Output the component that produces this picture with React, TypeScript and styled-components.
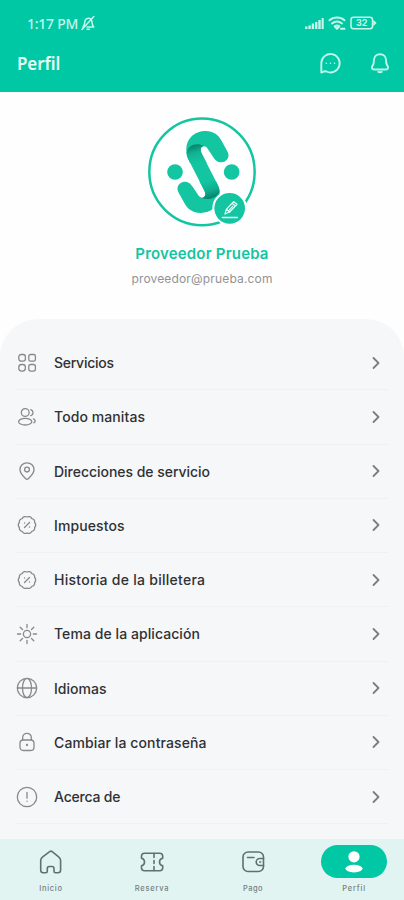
import React from "react";
import styled, { createGlobalStyle } from "styled-components";

const Global = createGlobalStyle`
  * { box-sizing: border-box; }
  body { margin: 0; background: #fff; font-family: Inter, "Noto Sans", sans-serif; }
`;

const Screen = styled.div`
  width: 404px; height: 900px; overflow: hidden;
  display: flex; flex-direction: column; background: #fefefe;
`;
const Header = styled.header`
  height: 92px; flex: none; background: #00c8a5; color: #e6fff8;
`;
const StatusBar = styled.div`
  height: 46px; padding: 0 27px; display: flex; align-items: center; gap: 2px;
`;
const Clock = styled.span`
  font: 500 14px "Noto Sans", sans-serif; letter-spacing: -0.25px; color: #c6f7e9;
  width: 52px; white-space: nowrap;
`;
const StatusIcons = styled.div`
  margin-left: auto; display: flex; align-items: center; gap: 4px;
`;
const TitleBar = styled.div`
  height: 34px; padding: 0 12px 0 17px; display: flex; align-items: center;
`;
const Title = styled.h1`
  margin: 0; flex: 1; font: 600 17px "Noto Sans", sans-serif; letter-spacing: -0.1px;
`;
const Actions = styled.div`display: flex; gap: 26px;`;

const Profile = styled.section`
  height: 227px; flex: none; padding-top: 24.5px;
  display: flex; flex-direction: column; align-items: center;
`;
const Name = styled.div`
  margin-top: 5px; padding-top: 8px; font-size: 15px; line-height: 24px; font-weight: 600;
  letter-spacing: 0.18px; color: #13c5a1;
`;
const Email = styled.div`
  margin-top: 3px; font-size: 12px; line-height: 20px; letter-spacing: 0.16px; color: #929395;
`;

const Panel = styled.main`
  flex: 1; min-height: 0; background: #f5f7f9; border-radius: 38px 38px 0 0;
  padding: 17px 15px 0;
`;
const Row = styled.div`
  height: 54.25px; padding: 0 6px 0 1px; display: flex; align-items: center;
  border-bottom: 1px solid #eff1f3;
`;
const RowIcon = styled.span`
  width: 22px; height: 22px; margin-right: 16px; color: #88898b; display: flex;
`;
const RowLabel = styled.span<{ $track: number }>`
  flex: 1; font-size: 14px; line-height: 20px; font-weight: 500; color: #303133;
  padding-top: 1px; letter-spacing: ${(p) => p.$track}px; white-space: nowrap;
`;

const Nav = styled.nav`
  height: 61px; flex: none; display: grid; grid-template-columns: repeat(4, 101px);
  padding-left: 0.5px; background: #e2f4f2;
`;
const Tab = styled.div`
  display: flex; flex-direction: column; align-items: center; padding-top: 6px; gap: 6px;
`;
const TabPill = styled.span<{ $active?: boolean }>`
  width: 66px; height: 33px; border-radius: 17px; display: flex; align-items: center; justify-content: center;
  background: ${(p) => (p.$active ? "#00c8a5" : "transparent")};
  color: ${(p) => (p.$active ? "#fff" : "#60706f")};
`;
const TabLabel = styled.span<{ $track: number }>`
  font-size: 7.5px; line-height: 10px; font-weight: 500; letter-spacing: ${(p) => p.$track}px; color: #74807f;
`;

const Stroke = styled.svg<{ $w?: number }>`
  display: block; fill: none; stroke: currentColor; stroke-width: ${(p) => p.$w ?? 1.3};
  stroke-linecap: round; stroke-linejoin: round;
`;

const scallop = (() => {
  const n = 10;
  const pt = (i: number) => {
    const a = (i * 2 * Math.PI) / n - Math.PI / 2;
    return `${(11 + 8 * Math.cos(a)).toFixed(2)} ${(11 + 8 * Math.sin(a)).toFixed(2)}`;
  };
  let d = `M${pt(0)}`;
  for (let i = 1; i <= n; i++) d += `A3.3 3.3 0 0 1 ${pt(i)}`;
  return d + "Z";
})();

const Percent = () => (
  <>
    <path d={scallop} />
    <path d="M8.5 13.5l5-5M8.6 9h.1M13.4 13h.1" />
  </>
);

const rows: { label: string; track: number; icon: React.ReactNode }[] = [
  {
    label: "Servicios", track: -0.26,
    icon: (
      <>
        <rect x="2.8" y="2.5" width="6.6" height="6.6" rx="2.3" />
        <rect x="12.8" y="2.5" width="6.6" height="6.6" rx="1.7" />
        <rect x="2.8" y="12.5" width="6.6" height="6.6" rx="2.8" />
        <rect x="12.8" y="12.5" width="6.6" height="6.6" rx="2" />
      </>
    ),
  },
  {
    label: "Todo manitas", track: 0.09,
    icon: (
      <>
        <circle cx="9.2" cy="6.5" r="3.9" />
        <ellipse cx="9.2" cy="15.7" rx="6.6" ry="3.3" />
        <path d="M14.8 3.6a3.2 3.2 0 0 1 0 6.1M17.4 12.8c2.2.8 2.4 3 .4 4" />
      </>
    ),
  },
  {
    label: "Direcciones de servicio", track: -0.03,
    icon: (
      <>
        <path d="M11 2.8c-4 0-7 3-7 6.8 0 4.3 3.5 7 5.8 9.2.7.7 1.7.7 2.4 0C14.5 16.6 18 13.9 18 9.6 18 5.8 15 2.8 11 2.8Z" />
        <circle cx="11" cy="9.6" r="2.4" />
      </>
    ),
  },
  { label: "Impuestos", track: 0.1, icon: <Percent /> },
  { label: "Historia de la billetera", track: 0.27, icon: <Percent /> },
  {
    label: "Tema de la aplicación", track: 0.07,
    icon: (
      <>
        <circle cx="11" cy="11" r="3.6" />
        <path d="M11 1.5v3.2M11 17.3v3.2M1.5 11h3.2M17.3 11h3.2M4.2 4.2l2.3 2.3M15.5 15.5l2.3 2.3M4.2 17.8l2.3-2.3M15.5 6.5l2.3-2.3" />
      </>
    ),
  },
  {
    label: "Idiomas", track: 0.02,
    icon: (
      <>
        <circle cx="11" cy="11" r="9.7" />
        <ellipse cx="11" cy="11" rx="4.5" ry="9.7" />
        <path d="M1.5 11h19" />
      </>
    ),
  },
  {
    label: "Cambiar la contraseña", track: 0.11,
    icon: (
      <>
        <rect x="4" y="9" width="14" height="10.5" rx="3.2" />
        <path d="M6.7 9V6.6a4.3 4.3 0 0 1 8.600 0V9" />
        <circle cx="11" cy="14" r=".5" />
      </>
    ),
  },
  {
    label: "Acerca de", track: -0.19,
    icon: (
      <>
        <circle cx="11" cy="11" r="9.7" />
        <path d="M11 6.5v5.700M11 15.200v.1" />
      </>
    ),
  },
];

const tabs: { label: string; track: number; active?: boolean; icon: React.ReactNode }[] = [
  {
    label: "Inicio", track: 0.7,
    icon: <path d="M10.7 1.700 3.700 6.800C2.300 7.900 1.700 8.700 1.700 10.500V20c0 1.800.8 2.700 2.600 2.700h2.500c1 0 1.500-.5 1.500-1.500v-2.700c0-1.300.7-2 2-2h2.700c1.300 0 2 .7 2 2v2.700c0 1 .5 1.500 1.500 1.500H19c1.800 0 2.600-.9 2.600-2.700v-9.500c0-1.800-.6-2.600-2-3.700l-6.400-5.100a2 2 0 0 0-2.500 0Z" />,
  },
  {
    label: "Reserva", track: 0.8,
    icon: (
      <>
        <path d="M4.500 3.300h15.200c2 0 3 1 3 3v1.900c-2.200.5-3.200 2-3.200 3.800s1 3.300 3.200 3.800v1.900c0 2-1 3-3 3H4.500c-2 0-3-1-3-3v-1.900c2.100-.5 3-2 3-3.800s-.9-3.300-3-3.800V6.300c0-2 1-3 3-3Z" />
        <path d="M14 3.500v4M14 10.500v3M14 16.500v4" />
      </>
    ),
  },
  {
    label: "Pago", track: 0.5,
    icon: (
      <>
        <rect x="2" y="2" width="20.500" height="19.500" rx="5" />
        <path d="M6.500 7.500h6.500M22.500 8.500h-3.800a3.500 3.500 0 0 0 0 7h3.800M18.700 12h1" />
      </>
    ),
  },
  {
    label: "Perfil", track: 0.8, active: true,
    icon: (
      <g fill="currentColor" stroke="none">
        <circle cx="12" cy="6.800" r="5.600" />
        <ellipse cx="12" cy="18.600" rx="8.600" ry="3.800" />
      </g>
    ),
  },
];

const Avatar = () => (
  <svg width="110" height="112" viewBox="83 35 330 336">
    <defs>
      <linearGradient id="foldTop" x1="238" y1="172" x2="222" y2="112" gradientUnits="userSpaceOnUse">
        <stop offset="0" stopColor="#13c5a1" />
        <stop offset="0.5" stopColor="#10b493" />
        <stop offset="0.9" stopColor="#08806b" />
        <stop offset="1" stopColor="#0b9a80" />
      </linearGradient>
      <linearGradient id="foldBottom" x1="264" y1="228" x2="280" y2="284" gradientUnits="userSpaceOnUse">
        <stop offset="0" stopColor="#13c5a1" />
        <stop offset="0.5" stopColor="#10ac8d" />
        <stop offset="0.9" stopColor="#08806b" />
        <stop offset="1" stopColor="#0b9a80" />
      </linearGradient>
    </defs>
    <ellipse cx="248" cy="199.500" rx="158" ry="160" fill="#fff" stroke="#13c5a1" strokeWidth="7.500" />
    <circle cx="167" cy="200" r="23.500" fill="#13c5a1" />
    <circle cx="337" cy="200" r="23.500" fill="#13c5a1" />
    <path fill="#13c5a1" d="M201 130C201 98 228 77 258 77C283 77 298 90 307 107L324 138C334 156 321 171 306 171C294 171 287 164 281 154L265 130C258 119 244 121 244 133C244 138 246 142 249 148L295 238C301 249 301 260 301 270C301 302 274 323 244 323C219 323 204 310 195 293L178 262C168 244 181 229 196 229C208 229 215 236 221 246L237 270C244 281 258 279 258 267C258 262 256 258 253 252L207 162C201 151 201 140 201 130Z" />
    <path fill="url(#foldTop)" d="M202 142C206 119 232 111 254 122C247 123 244 128 244 134C244 138 246 142 249 148L262 173L212 173L207 162C204 155 202 148 202 142Z" />
    <path fill="url(#foldBottom)" d="M240 228L290 228L295 238C300 247 302 256 300 262C288 280 264 285 247 278C255 277 258 272 258 267C258 262 256 258 253 252Z" />
    <circle cx="331" cy="309" r="49" fill="#13c5a1" stroke="#fff" strokeWidth="6" />
    <g fill="none" stroke="#e9fff9" strokeWidth="3.800" strokeLinejoin="round" strokeLinecap="round">
      <path d="M309 336.500h45" />
      <path d="M317 326l4-14 22-23 10 8-22 23zM338 294l10 8M321 312l10 8M328 316l12-13" />
    </g>
  </svg>
);

export default function App() {
  return (
    <>
      <Global />
      <Screen>
        <Header>
          <StatusBar>
            <Clock>1:17 PM</Clock>
            <Stroke width="14" height="16" viewBox="0 0 14 16" color="#c6f7e9" $w={1.5}>
              <path d="M2 12c2-2 1.500-5 2.300-7C5.200 2.800 9 2.300 10.500 5c.9 2 .2 5 2.200 7H6M6 14.300h2.500M1 14.500 12.800 1.500" />
            </Stroke>
            <StatusIcons>
              <svg width="19" height="14" viewBox="0 0 19 14" fill="#c6f7e9">
                <path d="M0 10.500h2.500V13H0zM3.400 9.500h2.400V13H3.400zM6.700 7.500h2.400V13H6.700zM10 6h2.400v7H10zM13.300 4h2.400v9h-2.400zM16.600 2h2.100v11h-2.100z" />
              </svg>
              <Stroke width="18" height="15" viewBox="0 0 18 15" color="#c6f7e9" $w={2}>
                <path d="M1.500 4.300c4-3.600 11-3.600 15 0M4 7.500c3-2.400 7-2.400 10 0M6.700 10.300c1.500-1 3.100-1 4.600 0L9 12.700Z" />
                <path d="M13 12.700h3.500" />
              </Stroke>
              <svg width="27" height="14" viewBox="0 0 27 14">
                <rect x="1" y="1.200" width="21.500" height="11.600" rx="2.500" fill="none" stroke="#c6f7e9" strokeWidth="1.500" />
                <path d="M23.200 3.800 26.600 7l-3.400 3.200z" fill="#c6f7e9" />
                <text x="11.700" y="10.200" textAnchor="middle" fontSize="9" fontWeight="700" fill="#c6f7e9">32</text>
              </svg>
            </StatusIcons>
          </StatusBar>
          <TitleBar>
            <Title>Perfil</Title>
            <Actions>
              <Stroke width="24" height="24" viewBox="0 0 24 24" color="#bff7e9" $w={1.9}>
                <path d="M3.300 21.500V12a9.200 9.200 0 1 1 5.200 8.500c-1.400-.5-2.600-.2-3.700.4z" />
                <path strokeWidth="1.500" d="M8.300 12.300h.1M12.400 12.300h.1M16.500 12.300h.1" />
              </Stroke>
              <Stroke width="24" height="24" viewBox="0 0 24 24" color="#bff7e9" $w={1.900}>
                <path d="M12 3.200c-3.700 0-6 2.500-6 5.800 0 3.200-.5 4.500-1.500 5.900-1.200 1.800-.4 3.600 1.500 3.600h12c1.900 0 2.700-1.800 1.500-3.600-1-1.400-1.500-2.700-1.500-5.900 0-3.300-2.300-5.800-6-5.800Z" />
                <path d="M10.300 20.900c1.200.4 2.200.4 3.400 0" />
              </Stroke>
            </Actions>
          </TitleBar>
        </Header>
        <Profile>
          <Avatar />
          <Name>Proveedor Prueba</Name>
          <Email>proveedor@prueba.com</Email>
        </Profile>
        <Panel>
          {rows.map((r) => (
            <Row key={r.label}>
              <RowIcon>
                <Stroke width="22" height="22" viewBox="0 0 22 22">{r.icon}</Stroke>
              </RowIcon>
              <RowLabel $track={r.track}>{r.label}</RowLabel>
              <Stroke width="14" height="14" viewBox="0 0 14 14" color="#7b7d80" $w={1.800}>
                <path d="M4.500 2 9.500 7l-5 5" />
              </Stroke>
            </Row>
          ))}
        </Panel>
        <Nav>
          {tabs.map((t) => (
            <Tab key={t.label}>
              <TabPill $active={t.active}>
                <Stroke width="24" height="24" viewBox="0 0 24 24" $w={1.600}>{t.icon}</Stroke>
              </TabPill>
              <TabLabel $track={t.track}>{t.label}</TabLabel>
            </Tab>
          ))}
        </Nav>
      </Screen>
    </>
  );
}
